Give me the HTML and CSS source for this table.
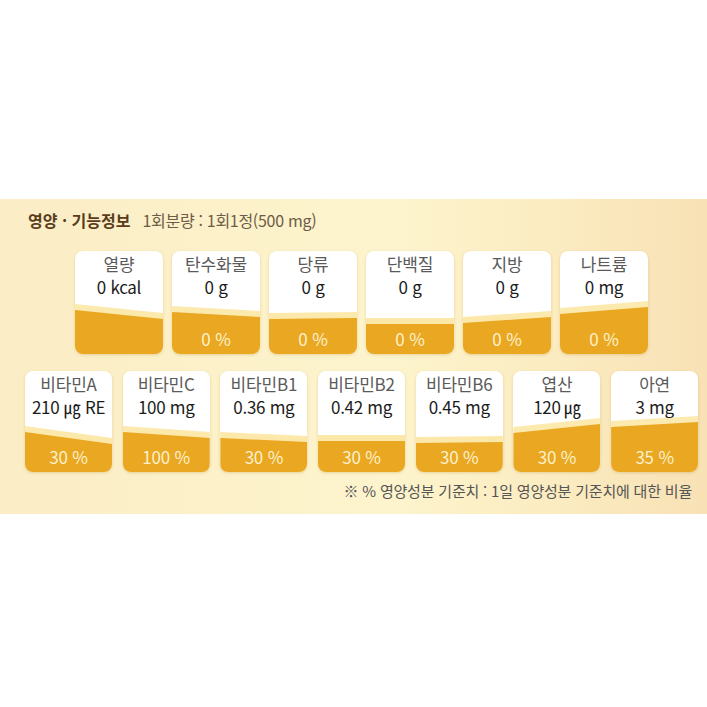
FILE: index.html
```html
<!DOCTYPE html>
<html lang="ko">
<head>
<meta charset="utf-8">
<link rel="stylesheet" href="styles.css">
</head>
<body>
<div class="panel">
  <div class="title"><strong>영양 · 기능정보</strong><span class="serving">1회분량 : 1회1정(500 mg)</span></div>
  <div class="row row1">
    <div class="card" style="--l:59px;--r:68px"><div class="label">열량</div><div class="val">0 kcal</div><div class="pct"></div></div>
    <div class="card" style="--l:61px;--r:66px"><div class="label">탄수화물</div><div class="val">0 g</div><div class="pct">0 %</div></div>
    <div class="card" style="--l:68px;--r:67px"><div class="label">당류</div><div class="val">0 g</div><div class="pct">0 %</div></div>
    <div class="card" style="--l:73px;--r:73px"><div class="label">단백질</div><div class="val">0 g</div><div class="pct">0 %</div></div>
    <div class="card" style="--l:72px;--r:66px"><div class="label">지방</div><div class="val">0 g</div><div class="pct">0 %</div></div>
    <div class="card" style="--l:63px;--r:56px"><div class="label">나트륨</div><div class="val">0 mg</div><div class="pct">0 %</div></div>
  </div>
  <div class="row row2">
    <div class="card" style="--l:61px;--r:73px"><div class="label">비타민A</div><div class="val">210 ㎍ RE</div><div class="pct">30 %</div></div>
    <div class="card" style="--l:61px;--r:67px"><div class="label">비타민C</div><div class="val">100 mg</div><div class="pct">100 %</div></div>
    <div class="card" style="--l:67px;--r:71px"><div class="label">비타민B1</div><div class="val">0.36 mg</div><div class="pct">30 %</div></div>
    <div class="card" style="--l:70px;--r:70px"><div class="label">비타민B2</div><div class="val">0.42 mg</div><div class="pct">30 %</div></div>
    <div class="card" style="--l:72px;--r:71px"><div class="label">비타민B6</div><div class="val">0.45 mg</div><div class="pct">30 %</div></div>
    <div class="card" style="--l:62px;--r:53px"><div class="label">엽산</div><div class="val">120 ㎍</div><div class="pct">30 %</div></div>
    <div class="card" style="--l:56px;--r:51px"><div class="label">아연</div><div class="val">3 mg</div><div class="pct">35 %</div></div>
  </div>
  <div class="note">※ % 영양성분 기준치 : 1일 영양성분 기준치에 대한 비율</div>
</div>
</body>
</html>
```
FILE: styles.css
```css
html, body {
  margin: 0;
  padding: 0;
  background: #ffffff;
}
body {
  font-family: "Noto Sans CJK KR", "Noto Sans", sans-serif;
  width: 707px;
  height: 707px;
  overflow: hidden;
}
.panel {
  margin-top: 199px;
  height: 315px;
  box-sizing: border-box;
  padding-top: 10px;
  background: linear-gradient(90deg, #fbedc5 0%, #fcf1c9 30%, #fdf4cd 55%, #fbebc0 80%, #f8e1b5 100%);
}
.title {
  padding-left: 28px;
  line-height: 22px;
  display: flex;
  align-items: baseline;
}
.title strong {
  font-size: 16px;
  font-weight: 700;
  color: #5a3c1c;
}
.serving {
  margin-left: 12px;
  color: #6e5c48;
  font-size: 16px;
  letter-spacing: -0.3px;
}
.row {
  display: grid;
  justify-content: start;
}
.row1 {
  margin-top: 20px;
  padding-left: 75px;
  grid-template-columns: repeat(6, 88px);
  column-gap: 9px;
}
.row1 .card { height: 103px; }
.row2 {
  margin-top: 17px;
  padding-left: 25px;
  grid-template-columns: repeat(7, 87px);
  column-gap: 10.7px;
}
.row2 .card { height: 101px; }
.card {
  position: relative;
  background: #ffffff;
  border-radius: 8px;
  box-shadow: 0 1px 3px rgba(170, 120, 20, 0.25);
  overflow: hidden;
  display: flex;
  flex-direction: column;
  align-items: center;
  box-sizing: border-box;
  padding-top: 2px;
}
.card::before {
  content: "";
  position: absolute;
  left: 0; right: 0; top: 0; bottom: 0;
  background: linear-gradient(180deg, #fdf0c4, #fbe49c);
  clip-path: polygon(0 calc(var(--l) - 6px), 100% calc(var(--r) - 6px), 100% 100%, 0 100%);
}
.card::after {
  content: "";
  position: absolute;
  left: 0; right: 0; top: 0; bottom: 0;
  background: #e9a722;
  clip-path: polygon(0 var(--l), 100% var(--r), 100% 100%, 0 100%);
}
.label, .val, .pct {
  position: relative;
  z-index: 1;
  white-space: nowrap;
}
.label {
  font-size: 17px;
  line-height: 22px;
  color: #5a5a5a;
  letter-spacing: -0.2px;
}
.val {
  font-size: 17px;
  line-height: 24px;
  color: #1c1c1c;
  letter-spacing: -0.3px;
}
.pct {
  margin-top: auto;
  margin-bottom: 4px;
  font-size: 17px;
  line-height: 22px;
  color: #fdf1cc;
  letter-spacing: -0.2px;
}
.note {
  margin-top: 9px;
  padding-right: 15px;
  text-align: right;
  font-size: 15px;
  line-height: 20px;
  color: #555555;
  letter-spacing: -0.2px;
}
```
